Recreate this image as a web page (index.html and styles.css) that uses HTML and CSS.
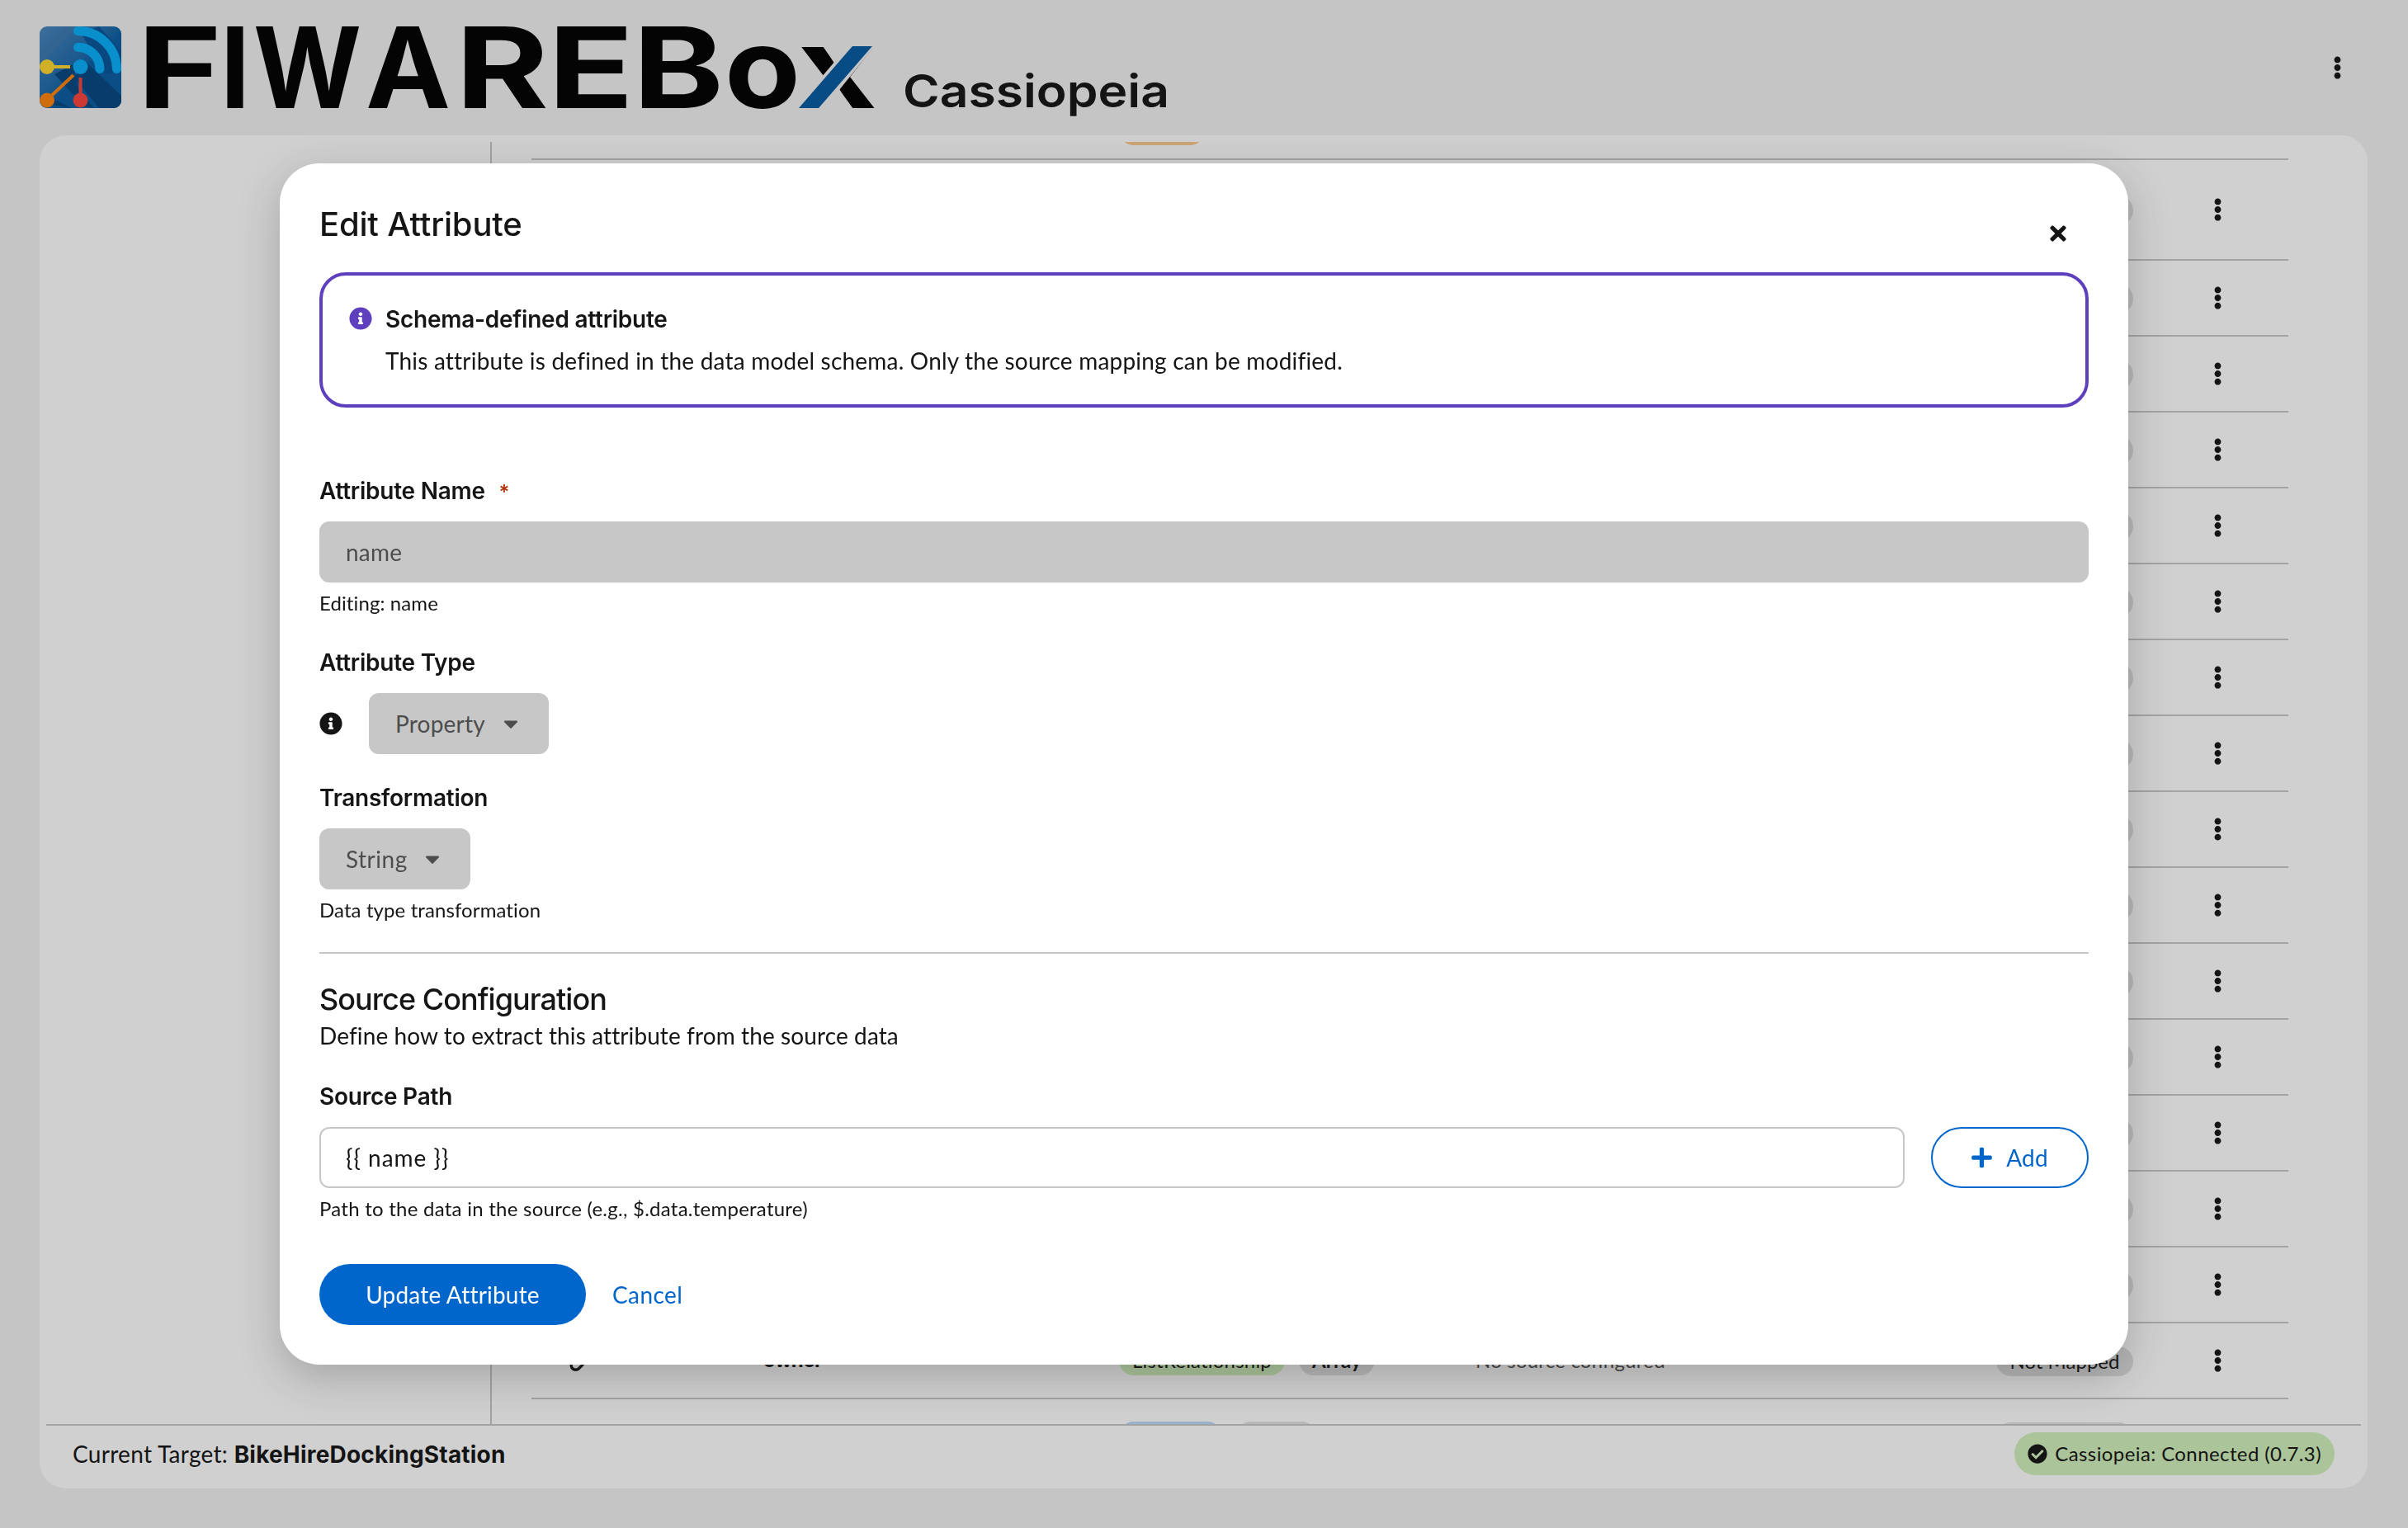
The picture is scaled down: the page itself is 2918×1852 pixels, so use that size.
FILE: index.html
```
<!DOCTYPE html>
<html lang="en">
<head>
    <meta charset="UTF-8">
    <meta name="viewport" content="width=device-width, initial-scale=1.0">
    <title>FIWAREBox Cassiopeia - Edit Attribute</title>
    <link rel="stylesheet" href="styles.css">
</head>
<body>

    <!-- Shared icons -->
    <svg class="icon-defs" aria-hidden="true">
        <symbol id="icon-kebab" viewBox="0 0 192 512">
            <path d="M96 184c39.8 0 72 32.2 72 72s-32.2 72-72 72-72-32.2-72-72 32.2-72 72-72zM24 80c0 39.8 32.2 72 72 72s72-32.2 72-72S135.8 8 96 8 24 40.2 24 80zm0 352c0 39.8 32.2 72 72 72s72-32.2 72-72-32.2-72-72-72-72 32.2-72 72z"/>
        </symbol>
        <symbol id="icon-info" viewBox="0 0 512 512">
            <path d="M256 8C119.043 8 8 119.083 8 256c0 136.997 111.043 248 248 248s248-111.003 248-248C504 119.083 392.957 8 256 8zm0 110c23.196 0 42 18.804 42 42s-18.804 42-42 42-42-18.804-42-42 18.804-42 42-42zm56 254c0 6.627-5.373 12-12 12h-88c-6.627 0-12-5.373-12-12v-24c0-6.627 5.373-12 12-12h12v-64h-12c-6.627 0-12-5.373-12-12v-24c0-6.627 5.373-12 12-12h64c6.627 0 12 5.373 12 12v100h12c6.627 0 12 5.373 12 12v24z"/>
        </symbol>
        <symbol id="icon-caret" viewBox="0 0 320 512">
            <path d="M31.3 192h257.3c17.8 0 26.7 21.5 14.1 34.1L174.1 354.8c-7.8 7.8-20.5 7.8-28.3 0L17.2 226.1C4.6 213.5 13.5 192 31.3 192z"/>
        </symbol>
        <symbol id="icon-link" viewBox="0 0 28 28">
            <g fill="none" stroke="currentColor" stroke-width="3.4" stroke-linecap="round">
                <path d="M12 16.500a5.500 5.500 0 0 1 0-7.600l4.600-4.600a5.300 5.300 0 0 1 7.600 7.600l-2.300 2.300"/>
                <path d="M16 11.500a5.500 5.500 0 0 1 0 7.600l-4.600 4.600a5.300 5.300 0 0 1-7.600-7.600l2.300-2.300"/>
            </g>
        </symbol>
    </svg>

    <header class="masthead">
        <svg class="brand-mark" viewBox="0 0 99 99">
            <defs>
                <clipPath id="markClip"><rect width="99" height="99" rx="9"/></clipPath>
                <linearGradient id="markBg" x1="0" y1="0" x2="1" y2="1">
                    <stop offset="0" stop-color="#4a86bd"/>
                    <stop offset=".45" stop-color="#1c69ab"/>
                    <stop offset=".55" stop-color="#085da2"/>
                    <stop offset="1" stop-color="#085da2"/>
                </linearGradient>
            </defs>
            <g clip-path="url(#markClip)">
                <rect width="99" height="99" fill="url(#markBg)"/>
                <path d="M0 32L32 0h14L0 46z" fill="#3b78b2"/>
                <path d="M50 8L72 0l27 30v24L80 58z" fill="#06559a"/>
                <path d="M56 43L99 84v15H72L42 62z" fill="#054881"/>
                <path d="M18 58l22-12 8 34-6 4zM16 95l-8-12 30 16zM44 95l12-8 10 12z" fill="#054881"/>
                <g fill="none" stroke="#08aefc" stroke-width="11" stroke-linecap="round">
                    <path d="M46.500 25.200A26.500 27 0 0 1 73 51.500"/>
                    <path d="M46.500 5.500A47 47 0 0 1 93.500 51.500"/>
                </g>
                <path d="M9 49h28" stroke="#ffd72f" stroke-width="4"/>
                <path d="M9 89L41 59" stroke="#fe830a" stroke-width="4"/>
                <path d="M49.500 89V62" stroke="#f9433a" stroke-width="4"/>
                <circle cx="49.500" cy="49" r="9" fill="#08aefc"/>
                <circle cx="9" cy="49" r="9" fill="#ffd72f"/>
                <circle cx="9" cy="89.500" r="9" fill="#fe830a"/>
                <circle cx="49.500" cy="89.500" r="9" fill="#f9433a"/>
            </g>
        </svg>
        <svg class="brand-name" viewBox="0 0 1260 132">
            <g class="wordmark">
                <text x="-10" y="99" textLength="103" lengthAdjust="spacingAndGlyphs">F</text>
                <text x="91" y="99" textLength="36" lengthAdjust="spacingAndGlyphs">I</text>
                <text x="131" y="99" textLength="131" lengthAdjust="spacingAndGlyphs">W</text>
                <text x="267" y="99" textLength="103" lengthAdjust="spacingAndGlyphs">A</text>
                <text x="376" y="99" textLength="113" lengthAdjust="spacingAndGlyphs">R</text>
                <text x="488" y="99" textLength="104" lengthAdjust="spacingAndGlyphs">E</text>
                <text x="591" y="99" textLength="110" lengthAdjust="spacingAndGlyphs">B</text>
                <text x="702" y="99" textLength="92" lengthAdjust="spacingAndGlyphs">o</text>
                <text x="790" y="99" textLength="97" lengthAdjust="spacingAndGlyphs">x</text>
            </g>
            <path d="M785 102L854 21H886L821 102z" fill="#f2f2f2"/>
            <path d="M792 99L857 24H881L816 99z" fill="#045aa1"/>
            <text class="product" x="918" y="98" textLength="323" lengthAdjust="spacingAndGlyphs">Cassiopeia</text>
        </svg>
        <button class="kebab masthead-menu" aria-label="Menu"><svg><use href="#icon-kebab"/></svg></button>
    </header>

    <main class="panel">
        <div class="workspace">
            <aside class="sidebar"></aside>
            <div class="attributes" id="attributes"></div>
        </div>
        <footer class="status-bar">
            <div class="target">Current Target: <strong>BikeHireDockingStation</strong></div>
            <div class="connection">
                <svg viewBox="0 0 512 512"><path d="M504 256c0 136.967-111.033 248-248 248S8 392.967 8 256 119.033 8 256 8s248 111.033 248 248zM227.314 387.314l184-184c6.248-6.248 6.248-16.379 0-22.627l-22.627-22.627c-6.248-6.249-16.379-6.249-22.628 0L216 308.118l-70.059-70.059c-6.248-6.248-16.379-6.248-22.628 0l-22.627 22.627c-6.248 6.248-6.248 16.379 0 22.627l104 104c6.249 6.249 16.379 6.249 22.628.001z"/></svg>
                <span>Cassiopeia: Connected (0.7.3)</span>
            </div>
        </footer>
    </main>

    <!-- Edit Attribute Modal -->
    <div class="backdrop">
        <div class="modal" role="dialog" aria-labelledby="modalTitle">
            <div class="modal-header">
                <h1 id="modalTitle">Edit Attribute</h1>
                <button class="close-btn" aria-label="Close">
                    <svg viewBox="0 0 352 512"><path d="M242.72 256l100.07-100.07c12.28-12.28 12.28-32.19 0-44.48l-22.24-22.24c-12.28-12.28-32.19-12.28-44.48 0L176 189.28 75.93 89.21c-12.28-12.28-32.19-12.28-44.48 0L9.210 111.45c-12.28 12.28-12.28 32.19 0 44.48L109.28 256 9.210 356.07c-12.28 12.28-12.28 32.19 0 44.48l22.24 22.24c12.28 12.28 32.2 12.28 44.48 0L176 322.72l100.07 100.07c12.28 12.28 32.2 12.28 44.48 0l22.24-22.24c12.28-12.28 12.28-32.19 0-44.48L242.72 256z"/></svg>
                </button>
            </div>

            <div class="alert">
                <svg class="info-icon"><use href="#icon-info"/></svg>
                <div>
                    <h4>Schema-defined attribute</h4>
                    <p>This attribute is defined in the data model schema. Only the source mapping can be modified.</p>
                </div>
            </div>

            <form class="form" onsubmit="return false">
                <div class="form-group">
                    <label for="attrName">Attribute Name <span class="required">*</span></label>
                    <input type="text" id="attrName" value="name" disabled>
                    <small>Editing: name</small>
                </div>

                <div class="form-group">
                    <label>Attribute Type</label>
                    <div class="type-row">
                        <svg class="info-icon"><use href="#icon-info"/></svg>
                        <button class="toggle toggle-type" disabled>Property<svg><use href="#icon-caret"/></svg></button>
                    </div>
                </div>

                <div class="form-group">
                    <label>Transformation</label>
                    <button class="toggle toggle-transform" disabled>String<svg><use href="#icon-caret"/></svg></button>
                    <small>Data type transformation</small>
                </div>

                <hr>

                <div class="section-title">
                    <h2>Source Configuration</h2>
                    <p>Define how to extract this attribute from the source data</p>
                </div>

                <div class="form-group">
                    <label for="sourcePath">Source Path</label>
                    <div class="path-row">
                        <input type="text" id="sourcePath" value="{{ name }}">
                        <button class="add-btn">
                            <svg viewBox="0 0 448 512"><path d="M416 208H272V64c0-17.670-14.330-32-32-32h-32c-17.670 0-32 14.330-32 32v144H32c-17.670 0-32 14.330-32 32v32c0 17.670 14.330 32 32 32h144v144c0 17.670 14.330 32 32 32h32c17.670 0 32-14.330 32-32V304h144c17.670 0 32-14.330 32-32v-32c0-17.670-14.330-32-32-32z"/></svg>
                            Add
                        </button>
                    </div>
                    <small class="path-help">Path to the data in the source (e.g., $.data.temperature)</small>
                </div>

                <div class="button-group">
                    <button class="primary-btn">Update Attribute</button>
                    <button class="link-btn">Cancel</button>
                </div>
            </form>
        </div>
    </div>

    <script>
        const container = document.getElementById('attributes');

        const rows = [{ tall: true, types: [['blue', 'Property'], ['orange', 'Object']] }, { tall: true }];
        for (let i = 0; i < 14; i++) rows.push({});
        rows.push({
            name: 'owner',
            types: [['green', 'ListRelationship'], ['gray strong', 'Array']],
            source: 'No source configured'
        });
        rows.push({ types: [['blue', 'Property'], ['gray strong', 'String']] });

        rows.forEach(row => {
            const el = document.createElement('div');
            el.className = row.tall ? 'attr-row tall' : 'attr-row';
            const pills = (row.types || []).map(([color, text]) => `<span class="pill ${color}">${text}</span>`).join('');
            el.innerHTML = `
                <div class="attr-icon"><svg><use href="#icon-link"/></svg></div>
                <div class="attr-name">${row.name || ''}</div>
                <div class="attr-types">${pills}</div>
                <div class="attr-source">${row.source || ''}</div>
                <div><span class="pill gray mapped">Not Mapped</span></div>
                <button class="kebab" aria-label="Actions"><svg><use href="#icon-kebab"/></svg></button>
            `;
            container.appendChild(el);
        });
    </script>

</body>
</html>
```

FILE: styles.css
```
:root {
    --text: #151515; --text-subtle: #4d4d4d; --border: #c7c7c7;
    --page: #f2f2f2; --white: #ffffff; --blue: #0066cc; --purple: #5e40be;
    --body-font: Lato, "Open Sans", sans-serif;
    --strong-font: Inter, "Open Sans", sans-serif;
}
* { box-sizing: border-box; }
body {
    margin: 0; height: 1852px; overflow: hidden;
    display: flex; flex-direction: column;
    background-color: var(--page); color: var(--text);
    font-family: var(--body-font); font-size: 28px; line-height: 42px; letter-spacing: 0.2px;
}
h1, h2, h4, p { margin: 0; }
button, input { font: inherit; letter-spacing: inherit; color: inherit; margin: 0; }
button { border: none; background: none; padding: 0; }
svg { display: block; fill: currentColor; }
.icon-defs { position: absolute; width: 0; height: 0; }

/* Header */
.masthead {
    height: 163px; margin-bottom: 1px; flex: none; padding: 0 80px 0 48px;
    display: flex; align-items: center;
}
.brand-mark { width: 99px; height: 99px; flex: none; }
.brand-name { width: 1260px; height: 132px; flex: none; margin: 32px 0 0 29px; overflow: visible; }
.wordmark { font: 700 136px Inter, sans-serif; letter-spacing: 0; fill: #000; }
.product { font: 600 55px Inter, sans-serif; letter-spacing: 0; fill: var(--text); }
.kebab svg { width: 11px; height: 28px; }
.masthead-menu { margin-left: auto; }

/* Main panel */
.panel {
    height: 1640px; margin: 0 49px 0 48px; padding: 8px; flex: none;
    background-color: var(--white); border-radius: 32px;
    display: flex; flex-direction: column;
}
.workspace { height: 1554px; flex: none; display: flex; overflow: hidden; }
.sidebar { width: 540px; flex: none; border-right: 2px solid var(--border); }
.attributes { width: 2129px; margin: -100px 0 0 48px; }
.attr-row {
    display: grid; grid-template-columns: 281px 431px 432px 631px 263px 11px;
    height: 92px; align-items: center; border-bottom: 2px solid var(--border);
    font-size: 24px; line-height: 36px;
}
.attr-row.tall { height: 122px; }
.attr-icon svg { width: 28px; height: 28px; margin-left: 46px; }
.attr-name { font: 700 24px/36px var(--strong-font); letter-spacing: -0.5px; }
.attr-types { display: flex; gap: 17px; }
.tall .attr-types { flex-direction: column; align-items: flex-start; gap: 16px; }
.attr-source { color: var(--text-subtle); }
.pill {
    display: inline-flex; justify-content: center; height: 36px; padding: 0 16px;
    border-radius: 18px; white-space: nowrap;
}
.pill.mapped { width: 166px; letter-spacing: 0; vertical-align: middle; }
.pill.blue { background-color: #b9dafc; }
.pill.orange { background-color: #fccb8f; }
.pill.green { background-color: #d1f1bb; }
.pill.gray { background-color: #e0e0e0; }
.pill.strong { font-weight: 700; }

.status-bar {
    height: 70px; flex: none; padding: 0 32px; border-top: 2px solid var(--border);
    display: flex; align-items: center; justify-content: space-between;
}
.target { letter-spacing: 0.3px; }
.target strong { font-family: var(--strong-font); letter-spacing: 0.2px; }
.connection {
    height: 52px; padding: 0 16px; border-radius: 26px; background-color: #d1f1bb;
    display: flex; align-items: center; gap: 9px;
    font-size: 24px; letter-spacing: 0.4px;
}
.connection svg { width: 24px; height: 24px; }

/* Modal */
.backdrop {
    position: fixed; inset: 0; background-color: rgba(21, 21, 21, 0.2);
    display: flex; align-items: center; justify-content: center;
}
.modal {
    width: 2240px; height: 1456px; padding: 48px;
    background-color: var(--white); border-radius: 48px;
    box-shadow: 0 16px 50px rgba(41, 41, 41, 0.25);
}
.modal-header {
    display: flex; justify-content: space-between; align-items: flex-start;
    height: 84px; padding-right: 27px;
}
.modal-header h1 { font: 500 40px/52px var(--strong-font); letter-spacing: -0.2px; }
.close-btn svg { width: 20px; height: 28px; margin-top: 23px; }
.alert {
    height: 164px; padding: 32px; border: 4px solid var(--purple); border-radius: 32px;
    display: flex; gap: 16px; margin-bottom: 80px;
}
.info-icon { width: 28px; height: 28px; flex: none; }
.alert .info-icon { color: var(--purple); margin-top: 6px; }
.alert h4 { font: 600 28px/42px var(--strong-font); letter-spacing: -0.25px; margin-bottom: 8px; }

.form-group { margin-bottom: 32px; }
.form-group label {
    display: block; margin-bottom: 16px;
    font: 600 28px/42px var(--strong-font); letter-spacing: -0.25px;
}
.required { color: #b1380b; font-size: 24px; line-height: 1; margin-left: 10px; }
input {
    display: block; width: 100%; height: 74px; padding: 0 30px;
    border: 2px solid var(--border); border-radius: 12px; background-color: var(--white);
}
input:disabled, .toggle { background-color: var(--border); color: var(--text-subtle); }
small { display: block; margin-top: 7px; height: 37px; font-size: 24px; line-height: 36px; letter-spacing: 0.1px; }
.type-row { display: flex; align-items: center; gap: 32px; }
.toggle {
    height: 74px; padding: 0 37px 0 32px; border-radius: 12px;
    display: flex; align-items: center; justify-content: space-between;
}
.toggle svg { width: 18px; height: 28px; }
.toggle-type { width: 218px; }
.toggle-transform { width: 183px; letter-spacing: 0.5px; }
hr { border: none; height: 2px; margin: 0 0 32px; background-color: var(--border); }
.section-title { margin-bottom: 32px; }
.section-title h2 { font: 500 36px/46px var(--strong-font); letter-spacing: -0.95px; }
.section-title p { letter-spacing: 0.1px; }
.path-row { display: flex; gap: 32px; }
#sourcePath { flex: 1; letter-spacing: 1px; }
.path-help { letter-spacing: 0.25px; }
.add-btn {
    width: 191px; height: 74px; border: 2px solid var(--blue); border-radius: 37px; color: var(--blue);
    display: flex; align-items: center; justify-content: center; gap: 17px;
}
.add-btn svg { width: 25px; height: 28px; }
.button-group { display: flex; gap: 32px; margin-top: 48px; }
.primary-btn { width: 323px; height: 74px; border-radius: 37px; background-color: var(--blue); color: var(--white); }
.link-btn { color: var(--blue); letter-spacing: 0.4px; }
```
